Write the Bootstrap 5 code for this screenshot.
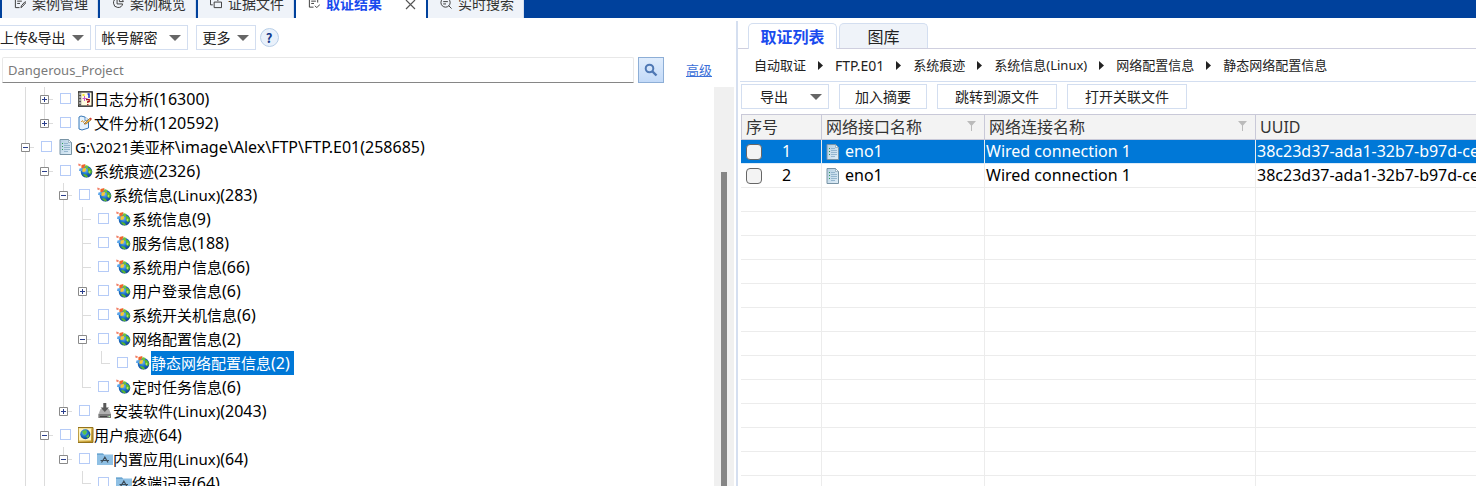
<!DOCTYPE html>
<html lang="zh-CN">
<head>
<meta charset="utf-8">
<meta name="viewport" content="width=device-width, initial-scale=1">
<title>取证结果</title>
<link rel="stylesheet" href="https://cdn.jsdelivr.net/npm/bootstrap@5.3.0/dist/css/bootstrap.min.css">
<style>
body{font-family:"Noto Sans","Noto Sans CJK SC",sans-serif;font-size:14px;color:#222;background:#fff}
.cjk{font-family:"Noto Sans CJK SC",sans-serif}
/* module tabs */
.topbar{height:18px;background:#00419c;padding-left:2px;gap:2px}
.modtab{height:30px;padding:0 9px 0 12px;gap:6px;background:#eff3f9;border:0;border-right:1px solid #d5dfee;line-height:30px;color:#333}
.modtab svg{width:12px;height:12px}
.modtab.on{background:#fff;color:#1a4bee;font-weight:700;border:0}
.modtab.on svg{color:#333}
.closer{background:#fff;border:0;padding:0 10px 0 16px;margin-left:-2px;height:30px;color:#555}
/* panes */
.pane-left{border-right:2px solid #d5dff0;margin-top:3px}
.tool{height:25px;padding:0 6px;border:1px solid #d3def0;background:#fff;border-radius:0;line-height:23px;color:#222;font-size:14px}
.tool svg{width:12px;height:6px;color:#666}
.tools{padding-top:4px;margin-left:-7px;gap:4px}
.gap-s{gap:6px}.gap-m{gap:11px}
.help{width:19px;height:19px;border:1px solid #b9cfe8;background:#e9f1fb;color:#14398a;font-size:13px;line-height:17px;font-weight:700}
.finder{padding:7px 24px 0 2px}
.query{height:26px;border:1px solid #e8e8e8;border-bottom-color:#868686;padding:0 5px;font-size:13px;color:#7a7a7a;border-radius:2px 2px 0 0}
.go{width:26px;height:26px;border:1px solid #8daed6;background:linear-gradient(#dfecfc,#c3daf8)}
.adv{font-size:13px;color:#3b6fd8;margin-left:22px}
/* tree */
.tree{padding-left:16px;font-size:15px;color:#000}
.tree b{font-weight:400;font-size:16px}
.twig{height:24px;line-height:24px}
.twig label{height:24px;white-space:nowrap}
.cell{width:19px;flex:none;border:0;background:none;padding:0;--g:linear-gradient(#dcdcdc,#dcdcdc)}
.cell svg{width:9px;height:9px;margin-top:8px}
.bar-v{background:var(--g) 9px 0/1px 100% no-repeat}
.bar-t{background:var(--g) 9px 0/1px 100% no-repeat,var(--g) 9px 12px/9px 1px no-repeat}
.bar-l{background:var(--g) 9px 0/1px 12px no-repeat,var(--g) 9px 12px/9px 1px no-repeat}
.twig input{appearance:none;width:11px;height:11px;flex:none;border:1px solid #b5cbf7;background:#fff;margin:6px 7px 0 6px}
.pic{width:16px;height:16px;flex:none;margin-top:4px}
.picked{background:#0078d7;color:#fff;padding-right:4px}
.track{width:20px;background:#f0f0f0;margin-right:2px;padding:85px 7px 0}
.thumb{background:#868686}
/* result side */
.views{padding:5px 0 0 10px;gap:2px;border-bottom:1px solid #cfcfdf}
.view{width:89px;height:25px;border:1px solid #d3def0;border-bottom:0;border-radius:5px 5px 0 0;background:#eff3f9;font-size:16px;line-height:25px;padding:0;color:#222}
.view.on{background:#fff;color:#1a4bee;font-weight:700;height:26px;margin-bottom:-1px}
.trail{height:33px;padding:0 0 0 14px;border-bottom:1px solid #d3def0;font-size:13px;margin:0 0 0 2px;line-height:33px}
.trail a{color:#222;text-decoration:none}
.trail .file{font-size:14px}
.trail svg{width:5px;height:9px;margin:0 12px;flex:none}
.acts{padding:2px 0 5px 3px;gap:10px}
.w88{width:88px}.w120{width:120px}
.ps-exp{padding-left:18px}
.grid{table-layout:fixed;margin-left:3px;width:calc(100% - 3px);border-collapse:separate;border-spacing:0;font-size:16px;color:#000}
.grid th{height:26px;background:#f3f3f3;border:solid #c9c9d8;border-width:1px 1px 1px 0;font-weight:400;line-height:24px;padding:0 4px;color:#333}
.grid th:first-child{border-left-width:1px}
.grid td{height:24px;padding:0 0 0 1px;line-height:23px;border:solid #ececec;border-width:0 1px 1px 0;white-space:nowrap;overflow:hidden}
.grid th:last-child,.grid td:last-child{border-right:0}
.grid .sel td{background:#0078d7;color:#fff;border-bottom-color:#dcebf8}
.grid input{appearance:none;width:16px;height:16px;background:#f3f3f3;border:1px solid #666;border-radius:4px;margin:0 20px 0 4px;flex:none}
.grid .pic{margin:4px 3px 0 3px}
.funnel{width:9px;height:10px;margin:6px 4px 0 0}
</style>
<script src="https://cdn.jsdelivr.net/npm/bootstrap@5.3.0/dist/js/bootstrap.bundle.min.js"></script>
</head>
<body class="vh-100 d-flex flex-column overflow-hidden">
<svg class="position-absolute" width="0" height="0" aria-hidden="true">
 <defs>
 <linearGradient id="gold" x1="0" y1="0" x2="1" y2="1"><stop offset="0" stop-color="#f7e08a"/><stop offset="1" stop-color="#b88d1e"/></linearGradient>
 <radialGradient id="sea" cx=".4" cy=".35" r=".7"><stop offset="0" stop-color="#7cc4f5"/><stop offset=".5" stop-color="#1d72c8"/><stop offset="1" stop-color="#0a3a86"/></radialGradient>
 <linearGradient id="paper" x1="0" y1="0" x2="1" y2="1"><stop offset="0" stop-color="#b4cfe2"/><stop offset="1" stop-color="#e0eef8"/></linearGradient>
 </defs>
 <symbol id="plus" viewBox="0 0 9 9"><path d="M.5.5h8v8h-8z" fill="#fff" stroke="#8a8a8a"/><path d="M2 4.500h5M4.500 2v5" stroke="#2b3f8c"/></symbol>
 <symbol id="minus" viewBox="0 0 9 9"><path d="M.5.5h8v8h-8z" fill="#fff" stroke="#8a8a8a"/><path d="M2 4.500h5" stroke="#2b3f8c"/></symbol>
 <symbol id="down" viewBox="0 0 12 6"><path d="M0 0h12L6 6z" fill="currentColor"/></symbol>
 <symbol id="next" viewBox="0 0 5 9"><path d="M0 0l5 4.500L0 9z" fill="#222"/></symbol>
 <symbol id="globe" viewBox="0 0 16 16"><circle cx="8.500" cy="8.800" r="5.800" fill="url(#sea)"/><path d="M10 5c2-.5 3 1 4 3l-.5 2.500-2 .5-1.500-2.500zM5 11l3 .5 2 2-1.500 1-2.500-1.500z" fill="#58b52e"/><path d="M11 7.500l1.500 1-1 2-1-1z" fill="#b7e55c"/><path d="M.3.500l2.500.7-.5 2-2-.7z" fill="#f2836c"/><path d="M3.500 2l4-1-1 3.500-3.200 1z" fill="#f0652a"/><path d="M7.500 2l3 1-1 3-2.700-1z" fill="#6cc03e"/><path d="M1.500 5.500l3-.5v3L1 8z" fill="#58a4ea"/><path d="M4.500 5.500l3.500-.5-.5 3.500-3 .5z" fill="#ffc72e"/></symbol>
 <symbol id="sheet" viewBox="0 0 16 16"><path d="M1 .5h8.500l3 3v12H1z" fill="url(#paper)" stroke="#7894a6"/><path d="M9.500.5v3h3z" fill="#f6fbff" stroke="#7894a6" stroke-width=".6"/><path d="M3 4.500h1M3 7.500h1M3 10.500h1" stroke="#2c9e53"/><path d="M5 4.500h4M5 6.500h6M5 8.500h6M5 10.500h6M5 12.500h4" stroke="#86abc6" stroke-width=".8"/></symbol>
 <symbol id="journal" viewBox="0 0 16 16"><path d="M0 .8h14.200v14.400H0z" fill="#fffce0" stroke="#111" stroke-width="1.300"/><path d="M.7 1.500h2.500v13H.7z" fill="#555"/><path d="M1 3h2M1 6h2M1 9h2M1 12h2" stroke="#eee"/><path d="M4.500 3h2v2h-2z" fill="#f4e52f"/><path d="M4.500 7.500h5M6.500 5v5" stroke="#c65ad0"/><path d="M9.500 3h1.500v4" stroke="#1836d8" stroke-width="1.500" fill="none"/><path d="M8 8.700h3.200v2H9.800v1.300M9.800 13v1.200" stroke="#a41218" stroke-width="1.300" fill="none"/></symbol>
 <symbol id="draft" viewBox="0 0 16 16"><path d="M1 2l2-1 4 1 3.500 3v8L4 15l-3-1z" fill="#e6f3fd" stroke="#3778b8"/><path d="M7 2v3.500l3.500-.5" fill="#fff" stroke="#3778b8" stroke-width=".8"/><path d="M3 7l1.500-1.500 1 2 1.500-2" fill="none" stroke="#d89b35"/><path d="M6 9l5.500-5.500L13 5 8 9z" fill="#f5b83d" stroke="#704c20" stroke-width=".6"/><path d="M11.500 3.500l1-1L14 4l-1 1z" fill="#d83d35"/></symbol>
 <symbol id="setup" viewBox="0 0 16 16"><path d="M3.500 6h8.500l2 5v4H1.500v-4z" fill="#b0b0b0"/><path d="M1.500 11h12.500v4H1.500z" fill="#7b7b7b"/><path d="M3 13.500h7" stroke="#444"/><path d="M11.500 13.500h1.500" stroke="#aef0ae"/><path d="M6.300 0h3v4.500H12L7.800 9 3.600 4.500h2.700z" fill="#595959"/></symbol>
 <symbol id="userbook" viewBox="0 0 16 16"><path d="M0 .5h15v15H0z" fill="url(#gold)" stroke="#94731c"/><path d="M1 1.500h12v12H1z" fill="#fff3bd"/><circle cx="7.300" cy="7.300" r="5" fill="url(#sea)"/><path d="M4 4.500l3-1.500 2 1-1 3-2 1zM8 9.500l3-2.500v2.500L9.500 11z" fill="#5cc244"/></symbol>
 <symbol id="folder" viewBox="0 0 16 16"><path d="M0 2.500h6l1 1h9V14H0z" fill="#8fc0e4"/><path d="M0 2.500h6l1 1.500H0z" fill="#6ba5d0"/><path d="M7.500 5.500l3.500 6M8 6l-3.500 5.500M3.500 9.500h8.500" fill="none" stroke="#3d4c59" stroke-width="1.200"/></symbol>
 <symbol id="filter" viewBox="0 0 9 10"><path d="M0 0h9L5 4.500V10H4V4.500z" fill="#bbb"/></symbol>
</svg>

<header class="topbar d-flex align-items-end overflow-hidden flex-shrink-0 cjk">
 <button class="modtab d-flex align-items-center"><svg viewBox="0 0 13 13" fill="none" stroke="currentColor"><path d="M10 1.500H1.500v10H6M3.500 4.500h5M3.500 7h3M7.500 11.500l.5-2 4-4.500 1 1-4 4.500z"/></svg>案例管理</button>
 <button class="modtab d-flex align-items-center"><svg viewBox="0 0 13 13" fill="none" stroke="currentColor"><path d="M5.500 1.500a5 5 0 1 0 6 6h-6zM8 .8a5 5 0 0 1 4.300 4.200H8z"/></svg>案例概览</button>
 <button class="modtab d-flex align-items-center"><svg viewBox="0 0 13 13" fill="none" stroke="currentColor"><path d="M3 8.500H.5v-7h8v3M4.500 5.500h8v6h-8z"/></svg>证据文件</button>
 <div class="d-flex">
  <button class="modtab on d-flex align-items-center"><svg viewBox="0 0 13 13" fill="none" stroke="currentColor"><path d="M10.500 6V1.500h-9v9.500H6M3.500 4.500h5M3.500 7h3M7.500 9.500l2 2 3.500-3.500"/></svg>取证结果</button>
  <button class="closer" aria-label="关闭"><svg width="11" height="11" viewBox="0 0 11 11" stroke="currentColor" stroke-width="1.200"><path d="M1 1l9 9M10 1L1 10"/></svg></button>
 </div>
 <button class="modtab d-flex align-items-center"><svg viewBox="0 0 13 13" fill="none" stroke="currentColor"><circle cx="6" cy="6" r="5"/><path d="M9.500 9.500l3 3M3.500 5h5M3.500 7.500h3"/></svg>实时搜索</button>
</header>

<main class="d-flex flex-grow-1 overflow-hidden">
<section class="pane-left col-6 d-flex flex-column">
 <div class="tools d-flex align-items-center cjk">
  <button class="tool d-flex align-items-center gap-s">上传&amp;导出<svg><use href="#down"/></svg></button>
  <button class="tool d-flex align-items-center gap-m">帐号解密<svg><use href="#down"/></svg></button>
  <button class="tool d-flex align-items-center gap-s ms-1">更多<svg><use href="#down"/></svg></button>
  <button class="help rounded-circle p-0">?</button>
 </div>
 <div class="finder d-flex align-items-center">
  <input class="query flex-grow-1" type="text" value="Dangerous_Project" aria-label="搜索">
  <button class="go p-0 ms-1 d-flex align-items-center justify-content-center" aria-label="查找"><svg width="14" height="14" viewBox="0 0 14 14" fill="none" stroke="#4f78b4"><circle cx="5.500" cy="5.500" r="3.800" stroke-width="2"/><path d="M8.500 8.500l4 4" stroke-width="2.400"/></svg></button>
  <a class="adv cjk" href="#">高级</a>
 </div>
 <div class="d-flex flex-grow-1 overflow-hidden mt-1">
 <ul class="tree list-unstyled mb-0 flex-grow-1 overflow-hidden">
  <li class="twig d-flex"><i class="cell bar-v"></i><button class="cell bar-t d-flex justify-content-center"><svg><use href="#plus"/></svg></button><input type="checkbox" id="n1"><svg class="pic"><use href="#journal"/></svg><label for="n1">日志分析<b>(16300)</b></label></li>
  <li class="twig d-flex"><i class="cell bar-v"></i><button class="cell bar-l d-flex justify-content-center"><svg><use href="#plus"/></svg></button><input type="checkbox" id="n2"><svg class="pic"><use href="#draft"/></svg><label for="n2">文件分析<b>(120592)</b></label></li>
  <li class="twig d-flex"><button class="cell bar-t d-flex justify-content-center"><svg><use href="#minus"/></svg></button><input type="checkbox" id="n3"><svg class="pic"><use href="#sheet"/></svg><label for="n3">G:\2021美亚杯<b>\image\Alex\FTP\FTP.E01(258685)</b></label></li>
  <li class="twig d-flex"><i class="cell bar-v"></i><button class="cell bar-t d-flex justify-content-center"><svg><use href="#minus"/></svg></button><input type="checkbox" id="n4"><svg class="pic"><use href="#globe"/></svg><label for="n4">系统痕迹<b>(2326)</b></label></li>
  <li class="twig d-flex"><i class="cell bar-v"></i><i class="cell bar-v"></i><button class="cell bar-t d-flex justify-content-center"><svg><use href="#minus"/></svg></button><input type="checkbox" id="n5"><svg class="pic"><use href="#globe"/></svg><label for="n5">系统信息(Linux)<b>(283)</b></label></li>
  <li class="twig d-flex"><i class="cell bar-v"></i><i class="cell bar-v"></i><i class="cell bar-v"></i><i class="cell bar-t"></i><input type="checkbox" id="n6"><svg class="pic"><use href="#globe"/></svg><label for="n6">系统信息<b>(9)</b></label></li>
  <li class="twig d-flex"><i class="cell bar-v"></i><i class="cell bar-v"></i><i class="cell bar-v"></i><i class="cell bar-t"></i><input type="checkbox" id="n7"><svg class="pic"><use href="#globe"/></svg><label for="n7">服务信息<b>(188)</b></label></li>
  <li class="twig d-flex"><i class="cell bar-v"></i><i class="cell bar-v"></i><i class="cell bar-v"></i><i class="cell bar-t"></i><input type="checkbox" id="n8"><svg class="pic"><use href="#globe"/></svg><label for="n8">系统用户信息<b>(66)</b></label></li>
  <li class="twig d-flex"><i class="cell bar-v"></i><i class="cell bar-v"></i><i class="cell bar-v"></i><button class="cell bar-t d-flex justify-content-center"><svg><use href="#plus"/></svg></button><input type="checkbox" id="n9"><svg class="pic"><use href="#globe"/></svg><label for="n9">用户登录信息<b>(6)</b></label></li>
  <li class="twig d-flex"><i class="cell bar-v"></i><i class="cell bar-v"></i><i class="cell bar-v"></i><i class="cell bar-t"></i><input type="checkbox" id="n10"><svg class="pic"><use href="#globe"/></svg><label for="n10">系统开关机信息<b>(6)</b></label></li>
  <li class="twig d-flex"><i class="cell bar-v"></i><i class="cell bar-v"></i><i class="cell bar-v"></i><button class="cell bar-t d-flex justify-content-center"><svg><use href="#minus"/></svg></button><input type="checkbox" id="n11"><svg class="pic"><use href="#globe"/></svg><label for="n11">网络配置信息<b>(2)</b></label></li>
  <li class="twig d-flex"><i class="cell bar-v"></i><i class="cell bar-v"></i><i class="cell bar-v"></i><i class="cell bar-v"></i><i class="cell bar-l"></i><input type="checkbox" id="n12"><svg class="pic"><use href="#globe"/></svg><label class="picked" for="n12">静态网络配置信息<b>(2)</b></label></li>
  <li class="twig d-flex"><i class="cell bar-v"></i><i class="cell bar-v"></i><i class="cell bar-v"></i><i class="cell bar-l"></i><input type="checkbox" id="n13"><svg class="pic"><use href="#globe"/></svg><label for="n13">定时任务信息<b>(6)</b></label></li>
  <li class="twig d-flex"><i class="cell bar-v"></i><i class="cell bar-v"></i><button class="cell bar-l d-flex justify-content-center"><svg><use href="#plus"/></svg></button><input type="checkbox" id="n14"><svg class="pic"><use href="#setup"/></svg><label for="n14">安装软件(Linux)<b>(2043)</b></label></li>
  <li class="twig d-flex"><i class="cell bar-v"></i><button class="cell bar-t d-flex justify-content-center"><svg><use href="#minus"/></svg></button><input type="checkbox" id="n15"><svg class="pic"><use href="#userbook"/></svg><label for="n15">用户痕迹<b>(64)</b></label></li>
  <li class="twig d-flex"><i class="cell bar-v"></i><i class="cell bar-v"></i><button class="cell bar-l d-flex justify-content-center"><svg><use href="#minus"/></svg></button><input type="checkbox" id="n16"><svg class="pic"><use href="#folder"/></svg><label for="n16">内置应用(Linux)<b>(64)</b></label></li>
  <li class="twig d-flex"><i class="cell bar-v"></i><i class="cell bar-v"></i><i class="cell"></i><i class="cell bar-l"></i><input type="checkbox" id="n17"><svg class="pic"><use href="#folder"/></svg><label for="n17">终端记录<b>(64)</b></label></li>
 </ul>
 <div class="track flex-shrink-0 d-flex"><div class="thumb flex-grow-1"></div></div>
 </div>
</section>

<section class="col-6 overflow-hidden">
 <div class="views d-flex cjk"><button class="view on">取证列表</button><button class="view">图库</button></div>
 <nav class="trail d-flex align-items-center" aria-label="路径">
  <a href="#">自动取证</a><svg><use href="#next"/></svg><a class="file" href="#">FTP.E01</a><svg><use href="#next"/></svg><a href="#">系统痕迹</a><svg><use href="#next"/></svg><a href="#">系统信息(Linux)</a><svg><use href="#next"/></svg><a href="#">网络配置信息</a><svg><use href="#next"/></svg><a href="#">静态网络配置信息</a>
 </nav>
 <div class="acts d-flex cjk">
  <button class="tool w88 d-flex align-items-center justify-content-between ps-exp">导出<svg><use href="#down"/></svg></button>
  <button class="tool w88">加入摘要</button>
  <button class="tool w120">跳转到源文件</button>
  <button class="tool w120">打开关联文件</button>
 </div>
 <table class="grid">
  <colgroup><col style="width:81px"><col style="width:163px"><col style="width:271px"><col></colgroup>
  <thead><tr><th>序号</th>
   <th><div class="d-flex justify-content-between">网络接口名称<svg class="funnel"><use href="#filter"/></svg></div></th>
   <th><div class="d-flex justify-content-between">网络连接名称<svg class="funnel"><use href="#filter"/></svg></div></th>
   <th>UUID</th></tr></thead>
  <tbody>
   <tr class="sel"><td><div class="d-flex align-items-center"><input type="checkbox" id="r1"><label for="r1">1</label></div></td><td><div class="d-flex"><svg class="pic"><use href="#sheet"/></svg>eno1</div></td><td>Wired connection 1</td><td>38c23d37-ada1-32b7-b97d-ce</td></tr>
   <tr><td><div class="d-flex align-items-center"><input type="checkbox" id="r2"><label for="r2">2</label></div></td><td><div class="d-flex"><svg class="pic"><use href="#sheet"/></svg>eno1</div></td><td>Wired connection 1</td><td>38c23d37-ada1-32b7-b97d-ce</td></tr>
   <tr><td></td><td></td><td></td><td></td></tr><tr><td></td><td></td><td></td><td></td></tr>
   <tr><td></td><td></td><td></td><td></td></tr><tr><td></td><td></td><td></td><td></td></tr>
   <tr><td></td><td></td><td></td><td></td></tr><tr><td></td><td></td><td></td><td></td></tr>
   <tr><td></td><td></td><td></td><td></td></tr><tr><td></td><td></td><td></td><td></td></tr>
   <tr><td></td><td></td><td></td><td></td></tr><tr><td></td><td></td><td></td><td></td></tr>
   <tr><td></td><td></td><td></td><td></td></tr><tr><td></td><td></td><td></td><td></td></tr>
   <tr><td></td><td></td><td></td><td></td></tr>
  </tbody>
 </table>
</section>
</main>
</body>
</html>
